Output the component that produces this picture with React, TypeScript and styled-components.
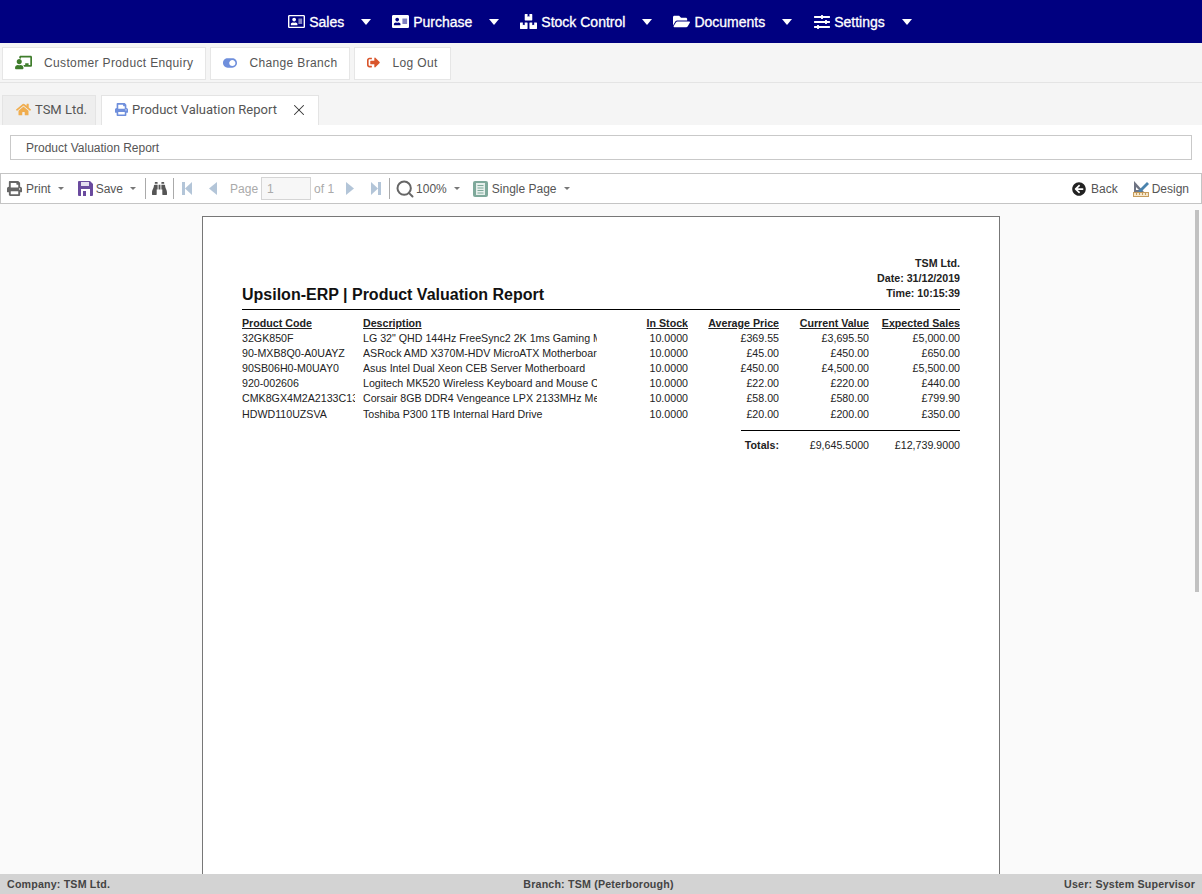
import React from 'react';
import styled, { createGlobalStyle } from 'styled-components';
import {
  FaRegAddressCard,
  FaAddressCard,
  FaBoxes,
  FaFolderOpen,
  FaSlidersH,
  FaChalkboardTeacher,
  FaToggleOn,
  FaSignOutAlt,
  FaHome,
  FaPrint,
  FaBinoculars,
  FaArrowCircleLeft,
} from 'react-icons/fa';
import { Search, X } from 'lucide-react';

const GlobalStyle = createGlobalStyle`
  html, body {
    margin: 0;
    padding: 0;
    height: 100%;
    overflow: hidden;
    background: #fafafa;
  }
  #root {
    height: 100%;
  }
  * {
    box-sizing: border-box;
  }
`;

const Page = styled.div`
  width: 1202px;
  height: 894px;
  display: flex;
  flex-direction: column;
  font-family: 'Liberation Sans', Arial, sans-serif;
  color: #333;
  background: #fff;
`;

const NavBar = styled.nav`
  height: 43px;
  flex: none;
  background: #000080;
  display: flex;
  justify-content: center;
  align-items: center;
  gap: 21px;
  padding-right: 2px;
`;

const NavItem = styled.div`
  display: flex;
  align-items: center;
  color: #fff;
  font-size: 14px;
  -webkit-text-stroke: 0.3px #fff;
  height: 43px;
`;

const NavIcon = styled.span`
  display: inline-flex;
  justify-content: center;
  width: 17px;
`;

const NavLabel = styled.span`
  margin-left: 4px;
`;

const NavCaret = styled.span`
  width: 0;
  height: 0;
  margin-left: 17px;
  border-left: 5px solid transparent;
  border-right: 5px solid transparent;
  border-top: 6px solid #fff;
`;

const ActionBar = styled.div`
  height: 40px;
  flex: none;
  background: #f5f5f5;
  border-bottom: 1px solid #e4e4e4;
  display: flex;
  align-items: flex-start;
  gap: 4px;
  padding: 4px 2px 0;
`;

const ActionButton = styled.div`
  height: 33px;
  display: flex;
  align-items: center;
  background: #fff;
  border: 1px solid #e6e6e6;
  padding: 0 12px 2px;
  font-size: 12px;
  letter-spacing: 0.36px;
  color: #555;
`;

const ActionIcon = styled.span<{ $color: string }>`
  display: inline-flex;
  color: ${(p) => p.$color};
  margin-right: 12px;
`;

const TabStrip = styled.div`
  height: 42px;
  flex: none;
  background: #f5f5f5;
  display: flex;
  align-items: flex-end;
  gap: 5px;
  padding: 0 0 0 2px;
`;

const Tab = styled.div<{ $active?: boolean }>`
  height: 30px;
  display: flex;
  align-items: center;
  padding: 0 ${(p) => (p.$active ? 10 : 8)}px 2px 13px;
  font-family: Roboto, sans-serif;
  font-size: 13px;
  color: #555;
  background: ${(p) => (p.$active ? '#fff' : '#eeeeee')};
  border: 1px solid #e4e4e4;
  border-bottom: none;
`;

const TabIcon = styled.span<{ $color: string }>`
  display: inline-flex;
  color: ${(p) => p.$color};
  margin-right: 4px;
`;

const TabClose = styled.span`
  display: inline-flex;
  margin-left: 13px;
  color: #333;
`;

const TitleRow = styled.div`
  height: 48px;
  flex: none;
  background: #fff;
  padding: 10px 10px 0;
`;

const TitleField = styled.div`
  height: 25px;
  border: 1px solid #c9c9c9;
  display: flex;
  align-items: center;
  padding-left: 15px;
  font-size: 12px;
  color: #555;
`;

const Toolbar = styled.div`
  height: 31px;
  flex: none;
  border: 1px solid #c4c4c4;
  background: #fff;
  display: flex;
  align-items: center;
  justify-content: space-between;
  padding: 0 12px 0 6px;
  font-size: 12px;
  color: #555;
`;

const ToolGroup = styled.div`
  display: flex;
  align-items: center;
`;

const ToolIcon = styled.span<{ $color?: string; $after?: number; $before?: number }>`
  display: inline-flex;
  color: ${(p) => p.$color ?? '#666'};
  margin-left: ${(p) => p.$before ?? 0}px;
  margin-right: ${(p) => p.$after ?? 4}px;
`;

const ToolCaret = styled.span<{ $after: number }>`
  display: inline-block;
  width: 0;
  height: 0;
  margin: 0 ${(p) => p.$after}px 0 7px;
  border-left: 3px solid transparent;
  border-right: 3px solid transparent;
  border-top: 3px solid #777;
`;

const ToolDivider = styled.span<{ $after: number }>`
  width: 1px;
  height: 21px;
  background: #aaa;
  margin-right: ${(p) => p.$after}px;
`;

const Dimmed = styled.span`
  color: #aaa;
`;

const PageInput = styled.div`
  width: 50px;
  height: 23px;
  margin: 0 3px;
  border: 1px solid #d5d5d5;
  background: #f7f7f7;
  color: #aaa;
  display: flex;
  align-items: center;
  padding-left: 5px;
`;

const Viewer = styled.div`
  flex: 1;
  min-height: 0;
  background: #fafafa;
  position: relative;
  overflow: hidden;
  display: flex;
  justify-content: center;
  padding-top: 12px;
`;

const ScrollThumb = styled.div`
  position: absolute;
  top: 6px;
  right: 3px;
  width: 4px;
  height: 382px;
  background: #c1c1c1;
`;

const ReportSheet = styled.div`
  width: 798px;
  height: 700px;
  flex: none;
  background: #fff;
  border: 1px solid #777;
  padding: 39px 39px 0;
  color: #000;
`;

const ReportHead = styled.div`
  display: flex;
  justify-content: space-between;
  align-items: flex-end;
  height: 54px;
  border-bottom: 1px solid #000;
  padding-bottom: 6px;
`;

const ReportTitle = styled.h1`
  margin: 0 0 -1px;
  font-size: 16px;
  line-height: 18px;
  font-weight: 700;
  color: #111;
`;

const ReportMeta = styled.div`
  margin-bottom: 2px;
  text-align: right;
  font-size: 10.67px;
  font-weight: 700;
  line-height: 15px;
  color: #222;
`;

const ReportTable = styled.div`
  display: grid;
  grid-template-columns: 113px 242px 91px 91px 90px 91px;
  margin-top: 5.6px;
  font-size: 10.67px;
  line-height: 15.15px;
  color: #222;
`;

const Cell = styled.div<{ $head?: boolean; $right?: boolean }>`
  overflow: hidden;
  white-space: nowrap;
  text-align: ${(p) => (p.$right ? 'right' : 'left')};
  font-weight: ${(p) => (p.$head ? 700 : 400)};
  text-decoration: ${(p) => (p.$head ? 'underline' : 'none')};
`;

const DescCell = styled(Cell)`
  margin-left: 8px;
`;

const TotalsRule = styled.div`
  margin: 8px 0 0 499px;
  border-top: 1px solid #000;
`;

const TotalsRow = styled.div`
  display: grid;
  grid-template-columns: 537px 90px 91px;
  justify-items: end;
  margin-top: 7px;
  font-size: 10.67px;
  line-height: 15px;
  color: #222;
`;

const TotalsLabel = styled.span`
  font-weight: 700;
`;

const StatusBar = styled.footer`
  height: 20px;
  flex: none;
  background: #d3d3d3;
  display: grid;
  grid-template-columns: 1fr auto 1fr;
  align-items: center;
  padding: 0 7px;
  font-size: 10.67px;
  font-weight: 700;
  letter-spacing: 0.18px;
  color: #444;
`;

const StatusMiddle = styled.span`
  padding-right: 5px;
`;

const StatusEnd = styled.span`
  text-align: right;
`;

const navItems = [
  { label: 'Sales', icon: <FaRegAddressCard size={17} /> },
  { label: 'Purchase', icon: <FaAddressCard size={17} /> },
  { label: 'Stock Control', icon: <FaBoxes size={17} /> },
  { label: 'Documents', icon: <FaFolderOpen size={17} /> },
  { label: 'Settings', icon: <FaSlidersH size={16} /> },
];

const rows = [
  ['32GK850F', 'LG 32" QHD 144Hz FreeSync2 2K 1ms Gaming Monitor', '10.0000', '£369.55', '£3,695.50', '£5,000.00'],
  ['90-MXB8Q0-A0UAYZ', 'ASRock AMD X370M-HDV MicroATX Motherboard', '10.0000', '£45.00', '£450.00', '£650.00'],
  ['90SB06H0-M0UAY0', 'Asus Intel Dual Xeon CEB Server Motherboard', '10.0000', '£450.00', '£4,500.00', '£5,500.00'],
  ['920-002606', 'Logitech MK520 Wireless Keyboard and Mouse Combo', '10.0000', '£22.00', '£220.00', '£440.00'],
  ['CMK8GX4M2A2133C13', 'Corsair 8GB DDR4 Vengeance LPX 2133MHz Memory', '10.0000', '£58.00', '£580.00', '£799.90'],
  ['HDWD110UZSVA', 'Toshiba P300 1TB Internal Hard Drive', '10.0000', '£20.00', '£200.00', '£350.00'],
];

const disabledBlue = '#b3c5d8';

function SaveIcon() {
  return (
    <svg width="15" height="15" viewBox="0 0 15 15">
      <path d="M0 1a1 1 0 0 1 1-1h11l3 3v11a1 1 0 0 1-1 1H1a1 1 0 0 1-1-1z" fill="#6a4a9e" />
      <rect x="3" y="1" width="8" height="4" fill="#e4ddf0" />
      <rect x="3" y="8" width="9" height="7" fill="#fff" />
      <rect x="5" y="10" width="3" height="5" fill="#6a4a9e" />
    </svg>
  );
}

function SkipIcon({ forward }: { forward?: boolean }) {
  return (
    <svg width="10" height="13" viewBox="0 0 10 13" style={{ transform: forward ? 'scaleX(-1)' : undefined }}>
      <rect x="0" y="0" width="3" height="13" fill={disabledBlue} />
      <path d="M10 0v13L3 6.5z" fill={disabledBlue} />
    </svg>
  );
}

function StepIcon({ forward }: { forward?: boolean }) {
  return (
    <svg width="8" height="13" viewBox="0 0 8 13" style={{ transform: forward ? 'scaleX(-1)' : undefined }}>
      <path d="M8 0v13L0 6.5z" fill={disabledBlue} />
    </svg>
  );
}

function SinglePageIcon() {
  return (
    <svg width="15" height="16" viewBox="0 0 15 16">
      <rect x="0" y="0" width="15" height="16" rx="2" fill="#7fa99b" />
      <rect x="3" y="2" width="9" height="12" fill="#e6efeb" />
      <path d="M4.5 4.5h6M4.5 7h6M4.5 9.5h6M4.5 12h6" stroke="#7fa99b" strokeWidth="1" />
    </svg>
  );
}

function DesignIcon() {
  return (
    <svg width="17" height="16" viewBox="0 0 17 16">
      <path d="M1 0v11h10z" fill="#6f7483" />
      <path d="M3 6v3h3z" fill="#fff" />
      <path d="M6 9l8-8 2 2-8 8-3 1z" fill="#4a83ad" />
      <rect x="0.5" y="11.5" width="15" height="4" fill="#f7e7c9" stroke="#c69c5c" />
      <path d="M3.5 12v2M6.5 12v2M9.5 12v2M12.5 12v2" stroke="#c69c5c" />
    </svg>
  );
}

export default function App() {
  return (
    <Page>
      <GlobalStyle />
      <NavBar>
        {navItems.map((item) => (
          <NavItem key={item.label}>
            <NavIcon>{item.icon}</NavIcon>
            <NavLabel>{item.label}</NavLabel>
            <NavCaret />
          </NavItem>
        ))}
      </NavBar>

      <ActionBar>
        <ActionButton>
          <ActionIcon $color="#3f7d2c"><FaChalkboardTeacher size={17} /></ActionIcon>
          Customer Product Enquiry
        </ActionButton>
        <ActionButton>
          <ActionIcon $color="#6f8fdc"><FaToggleOn size={14} /></ActionIcon>
          Change Branch
        </ActionButton>
        <ActionButton>
          <ActionIcon $color="#d9552b"><FaSignOutAlt size={13} /></ActionIcon>
          Log Out
        </ActionButton>
      </ActionBar>

      <TabStrip>
        <Tab>
          <TabIcon $color="#f0ad4e"><FaHome size={15} /></TabIcon>
          TSM Ltd.
        </Tab>
        <Tab $active>
          <TabIcon $color="#6f8fdc"><FaPrint size={13} /></TabIcon>
          Product Valuation Report
          <TabClose><X size={18} strokeWidth={1.4} /></TabClose>
        </Tab>
      </TabStrip>

      <TitleRow>
        <TitleField>Product Valuation Report</TitleField>
      </TitleRow>

      <Toolbar>
        <ToolGroup>
          <ToolIcon><FaPrint size={15} /></ToolIcon>
          Print
          <ToolCaret $after={14} />
          <ToolIcon $after={3}><SaveIcon /></ToolIcon>
          Save
          <ToolCaret $after={9} />
          <ToolDivider $after={6} />
          <ToolIcon $color="#555" $after={6}><FaBinoculars size={15} /></ToolIcon>
          <ToolDivider $after={8} />
          <ToolIcon $after={17}><SkipIcon /></ToolIcon>
          <ToolIcon $after={13}><StepIcon /></ToolIcon>
          <Dimmed>Page</Dimmed>
          <PageInput>1</PageInput>
          <Dimmed>of 1</Dimmed>
          <ToolIcon $before={12} $after={17}><StepIcon forward /></ToolIcon>
          <ToolIcon $after={8}><SkipIcon forward /></ToolIcon>
          <ToolDivider $after={5} />
          <ToolIcon $color="#666" $after={1}><Search size={20} strokeWidth={2.4} /></ToolIcon>
          100%
          <ToolCaret $after={13} />
          <ToolIcon><SinglePageIcon /></ToolIcon>
          Single Page
          <ToolCaret $after={0} />
        </ToolGroup>
        <ToolGroup>
          <ToolIcon $color="#222" $after={5}><FaArrowCircleLeft size={14} /></ToolIcon>
          Back
          <ToolIcon $before={15} $after={2}><DesignIcon /></ToolIcon>
          Design
        </ToolGroup>
      </Toolbar>

      <Viewer>
        <ReportSheet>
          <ReportHead>
            <ReportTitle>Upsilon-ERP | Product Valuation Report</ReportTitle>
            <ReportMeta>
              TSM Ltd.<br />
              Date: 31/12/2019<br />
              Time: 10:15:39
            </ReportMeta>
          </ReportHead>
          <ReportTable>
            <Cell $head>Product Code</Cell>
            <DescCell $head>Description</DescCell>
            <Cell $head $right>In Stock</Cell>
            <Cell $head $right>Average Price</Cell>
            <Cell $head $right>Current Value</Cell>
            <Cell $head $right>Expected Sales</Cell>
            {rows.map((row) => (
              <React.Fragment key={row[0]}>
                <Cell>{row[0]}</Cell>
                <DescCell>{row[1]}</DescCell>
                <Cell $right>{row[2]}</Cell>
                <Cell $right>{row[3]}</Cell>
                <Cell $right>{row[4]}</Cell>
                <Cell $right>{row[5]}</Cell>
              </React.Fragment>
            ))}
          </ReportTable>
          <TotalsRule />
          <TotalsRow>
            <TotalsLabel>Totals:</TotalsLabel>
            <span>£9,645.5000</span>
            <span>£12,739.9000</span>
          </TotalsRow>
        </ReportSheet>
        <ScrollThumb />
      </Viewer>

      <StatusBar>
        <span>Company: TSM Ltd.</span>
        <StatusMiddle>Branch: TSM (Peterborough)</StatusMiddle>
        <StatusEnd>User: System Supervisor</StatusEnd>
      </StatusBar>
    </Page>
  );
}
